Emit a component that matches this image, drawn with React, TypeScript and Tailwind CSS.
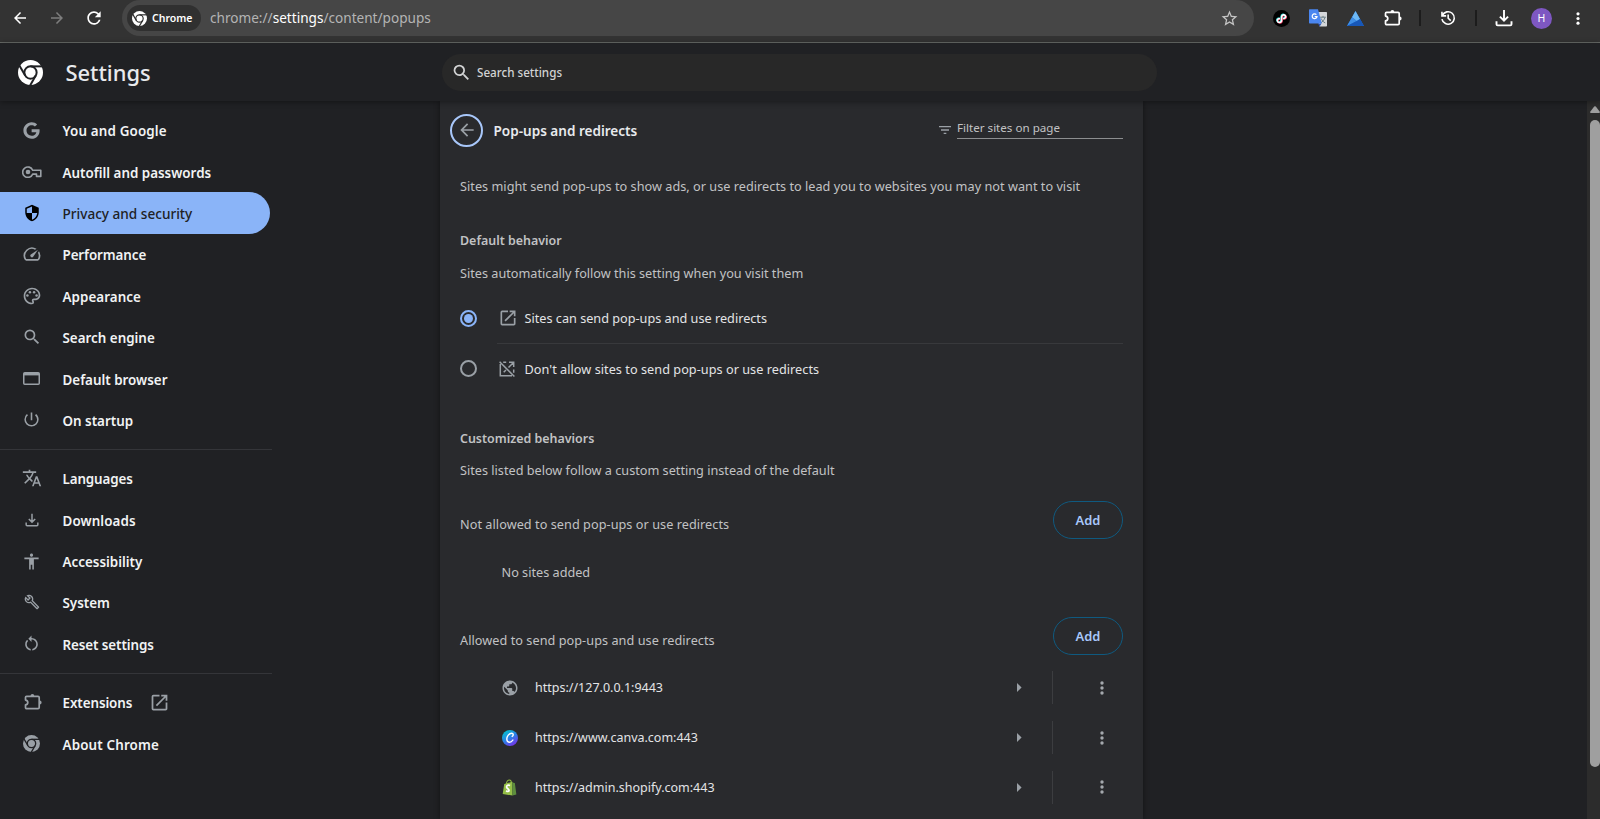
import type { ReactNode } from "react";
import { FaGoogle } from "react-icons/fa";
import {
  MdAccessibility,
  MdArrowBack,
  MdArrowForward,
  MdFilterList,
  MdOutlineBuild,
  MdOutlineOpenInNew,
  MdOutlinePalette,
  MdPowerSettingsNew,
  MdPublic,
  MdRefresh,
  MdRestartAlt,
  MdSearch,
  MdSecurity,
  MdSpeed,
  MdStarOutline,
  MdTranslate,
} from "react-icons/md";

type SvgProps = { className?: string };

function ChromeIcon({ className }: SvgProps) {
  return (
    <svg viewBox="0 0 24 24" className={className} fill="currentColor">
      <mask id="chrome-gaps" maskUnits="userSpaceOnUse" x="0" y="0" width="24" height="24">
        <rect width="24" height="24" fill="#fff" />
        <g fill="none" stroke="#000" strokeWidth="1.900">
          <circle cx="12" cy="12" r="5.900" />
          <path d="M12 6.100h12" />
          <path d="M12 6.100h12" transform="rotate(120 12 12)" />
          <path d="M12 6.100h12" transform="rotate(240 12 12)" />
        </g>
      </mask>
      <circle cx="12" cy="12" r="12" mask="url(#chrome-gaps)" />
    </svg>
  );
}

function PuzzleIcon({ className }: SvgProps) {
  return (
    <svg viewBox="0 0 18 18" className={className} fill="none" stroke="currentColor" strokeWidth="1.700" strokeLinejoin="round">
      <path d="M2.500 3.300h11.500c.7 0 1.200.5 1.200 1.200v10c0 .7-.5 1.200-1.200 1.200H2.700c-.7 0-1.200-.5-1.200-1.200v-2.600c1.500-.2 2.300-1.100 2.300-2.400S3 7.300 1.500 7.100V4.500c0-.7.4-1.200 1-1.200z" />
      <path d="M6.500 2.900a1.900 1.900 0 0 1 3.800 0zM15.700 7.600a1.900 1.900 0 0 1 0 3.800z" fill="currentColor" stroke="none" />
    </svg>
  );
}

function HistoryIcon({ className }: SvgProps) {
  return (
    <svg viewBox="0 0 18 18" className={className} fill="none" stroke="currentColor" strokeWidth="1.800">
      <path d="M2.600 6.300A7 7 0 1 1 2.200 10.200M2.200 1.900v4.700h4.700M9.200 5v4.300l2.900 2.700" />
    </svg>
  );
}

function DownloadIcon({ className }: SvgProps) {
  return (
    <svg viewBox="0 0 18 18" className={className} fill="none" stroke="currentColor" strokeWidth="1.900">
      <path d="M9 1v10.500M4.900 7.600 9 11.700l4.100-4.100M1.500 12.300v2.900c0 .7.5 1.200 1.200 1.200h12.600c.7 0 1.200-.5 1.200-1.200v-2.900" />
    </svg>
  );
}

function WindowIcon({ className }: SvgProps) {
  return (
    <svg viewBox="0 0 17 13" className={className} fill="none" stroke="currentColor" strokeWidth="1.500">
      <rect x=".75" y=".75" width="15.500" height="11.500" rx="1" />
      <path d="M1 2.200h15" strokeWidth="2.400" />
    </svg>
  );
}

function DotsIcon({ className }: SvgProps) {
  return (
    <svg viewBox="0 0 4 14" className={className} fill="currentColor">
      <circle cx="2" cy="2" r="1.700" />
      <circle cx="2" cy="7" r="1.700" />
      <circle cx="2" cy="12" r="1.700" />
    </svg>
  );
}

function KeyIcon({ className }: SvgProps) {
  return (
    <svg viewBox="0 0 20 12" className={className} fill="none" stroke="currentColor" strokeWidth="1.600">
      <path d="M10.700 4.200H18.800v6.200h-4.300V8.100h-3.800a5.200 5.200 0 1 1 0-3.900z" strokeLinejoin="round" />
      <circle cx="6" cy="6" r="2.300" fill="currentColor" stroke="none" />
    </svg>
  );
}

function PopupBlockedIcon({ className }: SvgProps) {
  return (
    <svg viewBox="0 0 16 16" className={className} fill="none" stroke="currentColor" strokeWidth="1.500">
      <path d="M1.300 3v11.700H13M4.200 1.300h3M10 1.300h4.700V6M14.700 8.500v3.300M14.500 1.500l-5 5M7 9l-2.300 2.300M.6.700l14.800 14.800" />
    </svg>
  );
}

function ShopIcon({ className }: SvgProps) {
  return (
    <svg viewBox="0 0 16 18" className={className}>
      <path d="M4.500 5.500C4.800 2.800 6.400.9 8 .9c1.400 0 2.100 1.700 2.200 3.800" fill="none" stroke="#8fb93f" strokeWidth="1.100" />
      <path d="M2.400 5.200 10.900 2.800 11.200 17.600.7 15.900z" fill="#95bf47" />
      <path d="m10.900 2.800 1.200 1.200 1.600.2 1.600 12.200-4.100 1.200z" fill="#5e8e3e" />
      <path d="M8.600 6.900c-1.900-1-3.700-.2-3.700 1.500 0 1.900 2.600 2 2.600 3.700 0 1.200-1.500 1.400-3.100.3" fill="none" stroke="#fff" strokeWidth="1.900" />
    </svg>
  );
}

function CanvaIcon({ className }: SvgProps) {
  return (
    <svg viewBox="0 0 16 16" className={className}>
      <defs>
        <linearGradient id="canva" x1="0.150" y1="0" x2="0.800" y2="1">
          <stop offset="0" stopColor="#00c9cc" />
          <stop offset="0.500" stopColor="#2b80e8" />
          <stop offset="1" stopColor="#7d2ae8" />
        </linearGradient>
      </defs>
      <circle cx="8" cy="8" r="8" fill="url(#canva)" />
      <path d="M10.200 6.400c1.500-.8 1.400-3.100-.5-3.100-2.700 0-4.900 2.900-4.900 5.800 0 4.200 4.200 3.900 6.100.9" fill="none" stroke="#fff" strokeWidth="1.400" strokeLinecap="round" />
    </svg>
  );
}

function ClipIcon({ className }: SvgProps) {
  const d = "M10.600 8.700c2.200 0 2.900-1.400 2.500-2.600-.7-1.900-4-1.700-4 1v3.200c0 2.700-3.700 2.800-4.200.7-.3-1.300.5-2.500 2.600-2.500";
  return (
    <svg viewBox="0 0 17 17" className={className} fill="none" strokeWidth="1.600">
      <circle cx="8.500" cy="8.500" r="8.500" fill="#000" />
      <path d={d} stroke="#25d8d5" transform="translate(-1 -.5)" />
      <path d={d} stroke="#f0305a" transform="translate(0 .5)" />
      <path d={d} stroke="#fff" transform="translate(-.5 0)" />
    </svg>
  );
}

function TranslateExtIcon({ className }: SvgProps) {
  return (
    <svg viewBox="0 0 18 18" className={className}>
      <path d="M7 3h10c.6 0 1 .4 1 1v12.500c0 .6-.4 1-1 1h-6.500z" fill="#d5d7da" />
      <path d="M11.200 8.200h5.600M14 6.900v1.300M16 8.400c-.7 2.500-2.500 4.500-4.200 5.500M12.200 9.500c.8 1.900 2 3.400 4 4.400" fill="none" stroke="#6b7f86" strokeWidth="1" />
      <path d="m9 14.500 3.500-.1-1.900 3.100z" fill="#2b4fb0" />
      <path d="M1 .3h8l3.800 14.200H1c-.6 0-1-.4-1-1V1.300c0-.6.4-1 1-1z" fill="#4a86f0" />
      <path d="M7.400 5.700a2.400 2.400 0 1 0 .6 1.900H5.700" fill="none" stroke="#fff" strokeWidth="1.200" />
    </svg>
  );
}

function PyramidIcon({ className }: SvgProps) {
  return (
    <svg viewBox="0 0 17 15" className={className}>
      <path d="M8.500 0 17 15H0z" fill="#1f6fd6" />
      <path d="M8.500 0 13 8 9.800 10 5 6.200z" fill="#6db8f5" />
      <path d="M5 6.200 9.800 10 0 15z" fill="#3f8fe6" />
      <path d="M13 8 17 15H0l9.800-5z" fill="#1757b8" />
    </svg>
  );
}

const navGroups: { label: string; icon: ReactNode; tracking?: string; active?: boolean; external?: boolean }[][] = [
  [
    { label: "You and Google", icon: <FaGoogle className="size-[17px]" />, tracking: "tracking-[0.150px]" },
    { label: "Autofill and passwords", icon: <KeyIcon className="h-3 w-5" /> },
    { label: "Privacy and security", icon: <MdSecurity className="size-[18px]" />, active: true },
    { label: "Performance", icon: <MdSpeed className="size-5" />, tracking: "tracking-[-0.1px]" },
    { label: "Appearance", icon: <MdOutlinePalette className="size-5" />, tracking: "tracking-[0.05px]" },
    { label: "Search engine", icon: <MdSearch className="size-5" /> },
    { label: "Default browser", icon: <WindowIcon className="h-[13px] w-[17px]" /> },
    { label: "On startup", icon: <MdPowerSettingsNew className="size-[19px]" /> },
  ],
  [
    { label: "Languages", icon: <MdTranslate className="size-5" />, tracking: "tracking-[-0.12px]" },
    { label: "Downloads", icon: <DownloadIcon className="size-3.5" />, tracking: "tracking-[0.100px]" },
    { label: "Accessibility", icon: <MdAccessibility className="size-[19px]" /> },
    { label: "System", icon: <MdOutlineBuild className="size-4" /> },
    { label: "Reset settings", icon: <MdRestartAlt className="size-[19px]" />, tracking: "tracking-[-0.080px]" },
  ],
  [
    { label: "Extensions", icon: <PuzzleIcon className="ml-0.5 size-[18px]" />, tracking: "tracking-[-0.080px]", external: true },
    { label: "About Chrome", icon: <ChromeIcon className="size-[17px]" />, tracking: "tracking-[0.150px]" },
  ],
];

const allowedSites = [
  { url: "https://127.0.0.1:9443", icon: <MdPublic className="size-[18px] text-[#9aa0a6]" /> },
  { url: "https://www.canva.com:443", icon: <CanvaIcon className="size-4" /> },
  { url: "https://admin.shopify.com:443", icon: <ShopIcon className="mr-px h-[17px] w-[15px]" /> },
];

function Toolbar() {
  return (
    <div className="flex h-[43px] shrink-0 border-b border-[#696c69] bg-[#333333] text-white">
      <div className="flex h-9 w-full items-center">
        <div className="flex w-[122px] shrink-0 items-center pl-[11px]">
          <MdArrowBack className="size-[18px]" />
          <MdArrowForward className="ml-[19px] size-[18px] text-[#7d7d7d]" />
          <MdRefresh className="ml-[18px] size-5" />
        </div>
        <div className="flex h-9 w-[1132px] shrink-0 items-center rounded-full bg-[#464646] pl-[5px]">
          <div className="flex h-[26px] w-[74px] items-center gap-[5px] rounded-full bg-[#303030] pl-[5px]">
            <ChromeIcon className="size-[15px]" />
            <span className="pt-px text-[10.500px] leading-none font-semibold">Chrome</span>
          </div>
          <div className="ml-[9px] text-[13.600px] leading-5 text-[#b4b4b4]">
            chrome://<span className="text-white">settings</span>/content/popups
          </div>
          <MdStarOutline className="mr-[15px] ml-auto size-[19px] text-[#c4c4c4]" />
        </div>
        <div className="ml-[19px] flex items-center">
          <ClipIcon className="size-[17px]" />
          <TranslateExtIcon className="ml-[19px] size-[18px]" />
          <PyramidIcon className="ml-5 h-[15px] w-[17px]" />
          <PuzzleIcon className="ml-5 size-[18px]" />
          <div className="ml-[17px] h-4 w-0.5 bg-[#1c1c1c]" />
          <HistoryIcon className="ml-[19px] size-4" />
          <div className="ml-[19px] h-4 w-0.5 bg-[#1c1c1c]" />
          <DownloadIcon className="ml-[18px] size-[18px]" />
          <div className="ml-[18px] flex size-[21px] items-center justify-center rounded-full bg-[#7e57c2] text-[10.500px] leading-none">H</div>
          <DotsIcon className="ml-6 h-[13px] w-[4px]" />
        </div>
      </div>
    </div>
  );
}

function SettingsHeader() {
  return (
    <header className="relative z-10 flex h-[58px] shrink-0 items-center bg-[#202124] shadow-[0_1px_6px_rgba(0,0,0,0.4)]">
      <div className="flex w-[442px] shrink-0 items-center pl-[18px] text-[#e8eaed]">
        <ChromeIcon className="size-[25px] text-white" />
        <h1 className="ml-[22.500px] pt-[2px] text-[21.900px] leading-7 font-medium">Settings</h1>
      </div>
      <div className="flex h-[37px] w-[715px] items-center rounded-full bg-[#282828] pl-[9px] text-[#d2d3d4]">
        <MdSearch className="size-[21px]" />
        <span className="ml-[5px] pt-[2px] text-[11.650px] font-medium">Search settings</span>
      </div>
    </header>
  );
}

function Sidebar() {
  return (
    <nav className="flex w-[440px] shrink-0 flex-col pt-[8.500px]">
      {navGroups.map((group, i) => (
        <div key={i} className={i > 0 ? "mt-2 w-[272px] border-t border-[#343539] pt-2" : "w-[272px]"}>
          {group.map((item) => (
            <a
              key={item.label}
              className={
                item.active
                  ? "flex h-[41.400px] w-[270px] items-center rounded-r-full bg-[#8ab4f8] text-[#202124]"
                  : "flex h-[41.400px] w-[270px] items-center text-[#f1f3f4]"
              }
            >
              <span className={item.active ? "flex w-[62.500px] justify-center pl-px text-black" : "flex w-[62.500px] justify-center pl-px text-[#9aa0a6]"}>
                {item.icon}
              </span>
              <span
                className={`pt-[2px] leading-5 whitespace-nowrap ${item.active ? "text-[13.600px] font-medium" : "text-[13.400px] font-semibold"} ${item.tracking ?? ""}`}
              >
                {item.label}
              </span>
              {item.external && <MdOutlineOpenInNew className="ml-[17px] size-[21px] text-[#9aa0a6]" />}
            </a>
          ))}
        </div>
      ))}
    </nav>
  );
}

function AddButton() {
  return (
    <button className="h-[38px] w-[70px] rounded-full border border-[#0f5a80] text-[12.900px] font-semibold text-[#a8c7fa]">Add</button>
  );
}

function Content() {
  return (
    <main className="flex w-[703px] shrink-0 flex-col bg-[#292a2d] pr-5 pl-5 text-[12.680px] leading-5 text-[#c1c2c4] shadow-[0_0_6px_rgba(0,0,0,0.45)]">
      <div className="flex h-[58px] shrink-0 items-center">
        <button className="-ml-[10px] flex size-[33px] items-center justify-center rounded-full border-2 border-[#a8c7fa] text-[#9aa0a6]">
          <MdArrowBack className="size-5" />
        </button>
        <h2 className="ml-[10.500px] pt-[2px] text-[13.550px] font-semibold text-[#e8eaed]">Pop-ups and redirects</h2>
        <MdFilterList className="mr-[4px] ml-auto size-4 text-[#9aa0a6]" />
        <div className="mb-[1px] h-[19px] w-[166px] border-b border-[#8c8e90] text-[11.620px] leading-4">Filter sites on page</div>
      </div>
      <p className="mt-[17px] tracking-[0.025px] whitespace-nowrap">
        Sites might send pop-ups to show ads, or use redirects to lead you to websites you may not want to visit
      </p>
      <h3 className="mt-[35px] text-[12.450px] font-semibold">Default behavior</h3>
      <p className="mt-[12px]">Sites automatically follow this setting when you visit them</p>

      <div className="mt-[10px] flex h-[50px] shrink-0 items-center text-[#e3e4e6]">
        <span className="flex size-[17px] items-center justify-center rounded-full border-2 border-[#8ab4f8]">
          <span className="size-[9px] rounded-full bg-[#8ab4f8]" />
        </span>
        <MdOutlineOpenInNew className="ml-[21px] size-5 text-[#9aa0a6]" />
        <span className="ml-[6.500px]">Sites can send pop-ups and use redirects</span>
      </div>
      <div className="ml-[37px] h-px shrink-0 bg-[#38393c]" />
      <div className="flex h-[50px] shrink-0 items-center text-[#e3e4e6]">
        <span className="mb-px size-[17px] rounded-full border-2 border-[#9aa0a6]" />
        <PopupBlockedIcon className="ml-[22px] size-4 text-[#9aa0a6]" />
        <span className="ml-[9.500px] tracking-[0.040px]">Don't allow sites to send pop-ups or use redirects</span>
      </div>

      <h3 className="mt-[35px] text-[12.450px] font-semibold">Customized behaviors</h3>
      <p className="mt-[11px]">Sites listed below follow a custom setting instead of the default</p>

      <div className="mt-[21px] flex h-[38px] shrink-0 items-center justify-between">
        <span className="pt-[7px] tracking-[0.050px]">Not allowed to send pop-ups or use redirects</span>
        <AddButton />
      </div>
      <p className="mt-[23px] ml-[41.500px]">No sites added</p>
      <div className="mt-[35px] flex h-[38px] shrink-0 items-center justify-between">
        <span className="pt-[7px] tracking-[0.050px]">Allowed to send pop-ups and use redirects</span>
        <AddButton />
      </div>

      <div className="mt-2 shrink-0">
        {allowedSites.map((site) => (
          <div key={site.url} className="flex h-[49.700px] items-center pl-[41px] text-[12.500px] text-[#e3e4e6]">
            <span className="flex w-[18px] justify-center">{site.icon}</span>
            <span className="ml-4 pt-px">{site.url}</span>
            <svg viewBox="0 0 5 9" className="ml-auto h-[9px] w-[5px] text-[#9aa0a6]" fill="currentColor">
              <path d="M0 0 4.600 4.500 0 9z" />
            </svg>
            <span className="ml-[30px] h-[33px] w-px bg-[#3c3d40]" />
            <DotsIcon className="mr-[19px] ml-[47px] h-[14px] w-[4px] text-[#a4a8ad]" />
          </div>
        ))}
      </div>
    </main>
  );
}

function Scrollbar() {
  return (
    <div className="ml-auto flex w-[13px] shrink-0 flex-col items-end bg-[#2c2c2c] pt-[5px]">
      <svg viewBox="0 0 10 7" className="h-[7px] w-[10px] shrink-0" fill="#9f9f9f">
        <path d="M4.200.6q.8-.9 1.600 0L9.800 5.800Q10.200 7 9 7H1Q-.2 7 .2 5.800z" />
      </svg>
      <div className="mt-[7px] h-[647px] w-[10px] shrink-0 rounded-full bg-[#9f9f9f]" />
    </div>
  );
}

export default function App() {
  return (
    <div className="flex h-screen w-full flex-col overflow-hidden bg-[#202124] font-['Noto_Sans',sans-serif]">
      <Toolbar />
      <SettingsHeader />
      <div className="flex min-h-0 flex-1">
        <Sidebar />
        <Content />
        <Scrollbar />
      </div>
    </div>
  );
}
